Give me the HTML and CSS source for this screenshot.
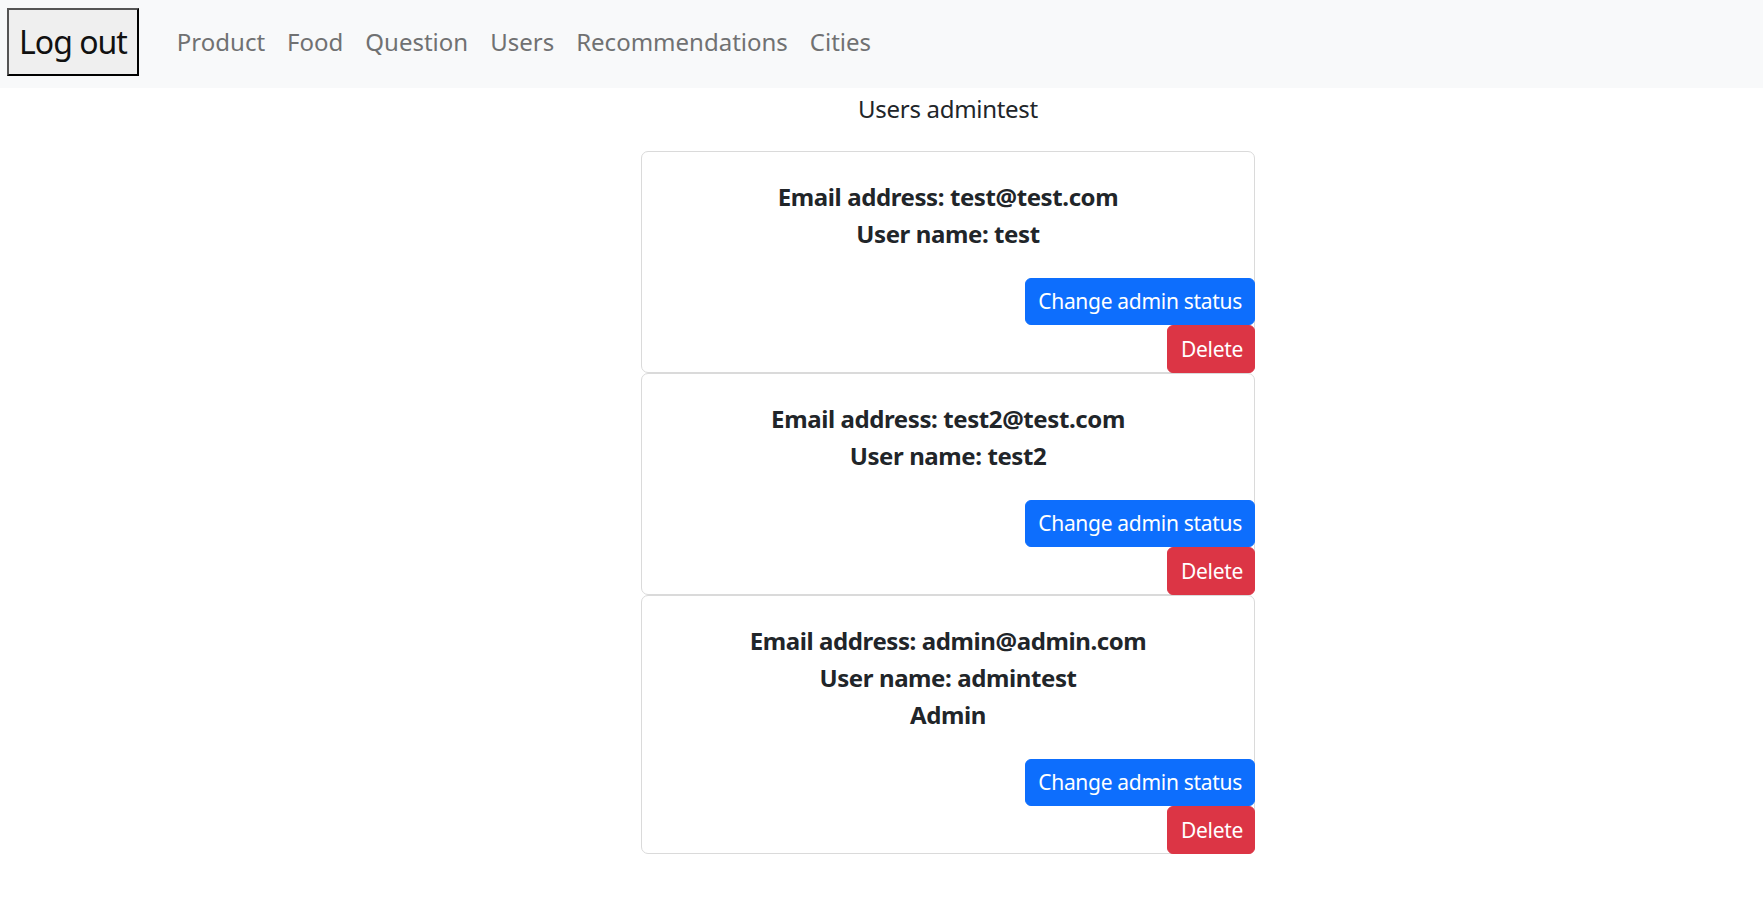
FILE: index.html
```html
<!DOCTYPE html>
<html lang="en">
<head>
<meta charset="utf-8">
<title>Users</title>
<link rel="stylesheet" href="styles.css">
</head>
<body>
<nav class="navbar">
  <button class="logout">Log out</button>
  <ul class="nav-links">
    <li><a href="#">Product</a></li>
    <li><a href="#">Food</a></li>
    <li><a href="#">Question</a></li>
    <li><a href="#">Users</a></li>
    <li><a href="#">Recommendations</a></li>
    <li><a href="#">Cities</a></li>
  </ul>
</nav>
<main class="main">
  <div class="page-title">Users admintest</div>
  <div class="cards">
    <div class="card">
      <div class="card-body">
        <div class="line">Email address: test@test.com</div>
        <div class="line">User name: test</div>
      </div>
      <div class="actions">
        <button class="btn btn-blue">Change admin status</button>
        <button class="btn btn-red">Delete</button>
      </div>
    </div>
    <div class="card">
      <div class="card-body">
        <div class="line">Email address: test2@test.com</div>
        <div class="line">User name: test2</div>
      </div>
      <div class="actions">
        <button class="btn btn-blue">Change admin status</button>
        <button class="btn btn-red">Delete</button>
      </div>
    </div>
    <div class="card">
      <div class="card-body">
        <div class="line">Email address: admin@admin.com</div>
        <div class="line">User name: admintest</div>
        <div class="line">Admin</div>
      </div>
      <div class="actions">
        <button class="btn btn-blue">Change admin status</button>
        <button class="btn btn-red">Delete</button>
      </div>
    </div>
  </div>
</main>
</body>
</html>
```
FILE: styles.css
```css
* { box-sizing: border-box; }
html, body { margin: 0; padding: 0; }
body {
  font-family: "Noto Sans", "Open Sans", sans-serif;
  font-size: 24px;
  color: #212529;
  background: #ffffff;
}
.navbar {
  display: flex;
  align-items: center;
  height: 88px;
  padding: 8px 0 12px 7px;
  background: #f8f9fa;
}
.logout {
  font-family: inherit;
  font-size: 32px;
  line-height: 48px;
  height: 68px;
  padding: 8px 10px;
  color: #111;
  background: #efefef;
  border: 2px solid;
  border-color: #555 #000 #000 #555;
  border-radius: 0;
  letter-spacing: -1px;
}
.nav-links {
  display: flex;
  list-style: none;
  margin: 0 0 0 27px;
  padding: 0;
}
.nav-links a {
  display: block;
  padding: 0 11px;
  color: #707172;
  text-decoration: none;
  font-size: 24px;
  line-height: 36px;
}
.main {
  display: flex;
  flex-direction: column;
  align-items: center;
  padding-left: 133px;
}
.page-title {
  margin-top: 3px;
  margin-bottom: 24px;
  line-height: 36px;
  letter-spacing: -0.3px;
}
.cards {
  width: 614px;
  display: flex;
  flex-direction: column;
}
.card {
  display: flex;
  flex-direction: column;
  border: 1px solid #dadada;
  border-radius: 7px;
  background: #fff;
}
.card-body {
  padding: 26px 24px 0;
  text-align: center;
}
.line {
  font-weight: 700;
  line-height: 37px;
  letter-spacing: -0.4px;
}
.actions {
  display: flex;
  flex-direction: column;
  align-items: flex-end;
  margin: 26px -1px -1px 0;
}
.btn {
  font-family: inherit;
  font-size: 21px;
  line-height: 33px;
  padding: 6px 12px;
  border: 1px solid transparent;
  border-radius: 6px;
  color: #fff;
  letter-spacing: -0.3px;
}
.btn-blue { background: #0d6efd; border-color: #0d6efd; height: 47px; }
.btn-red { background: #dc3545; border-color: #dc3545; height: 48px; padding: 6px 11px 6px 13px; }
```
